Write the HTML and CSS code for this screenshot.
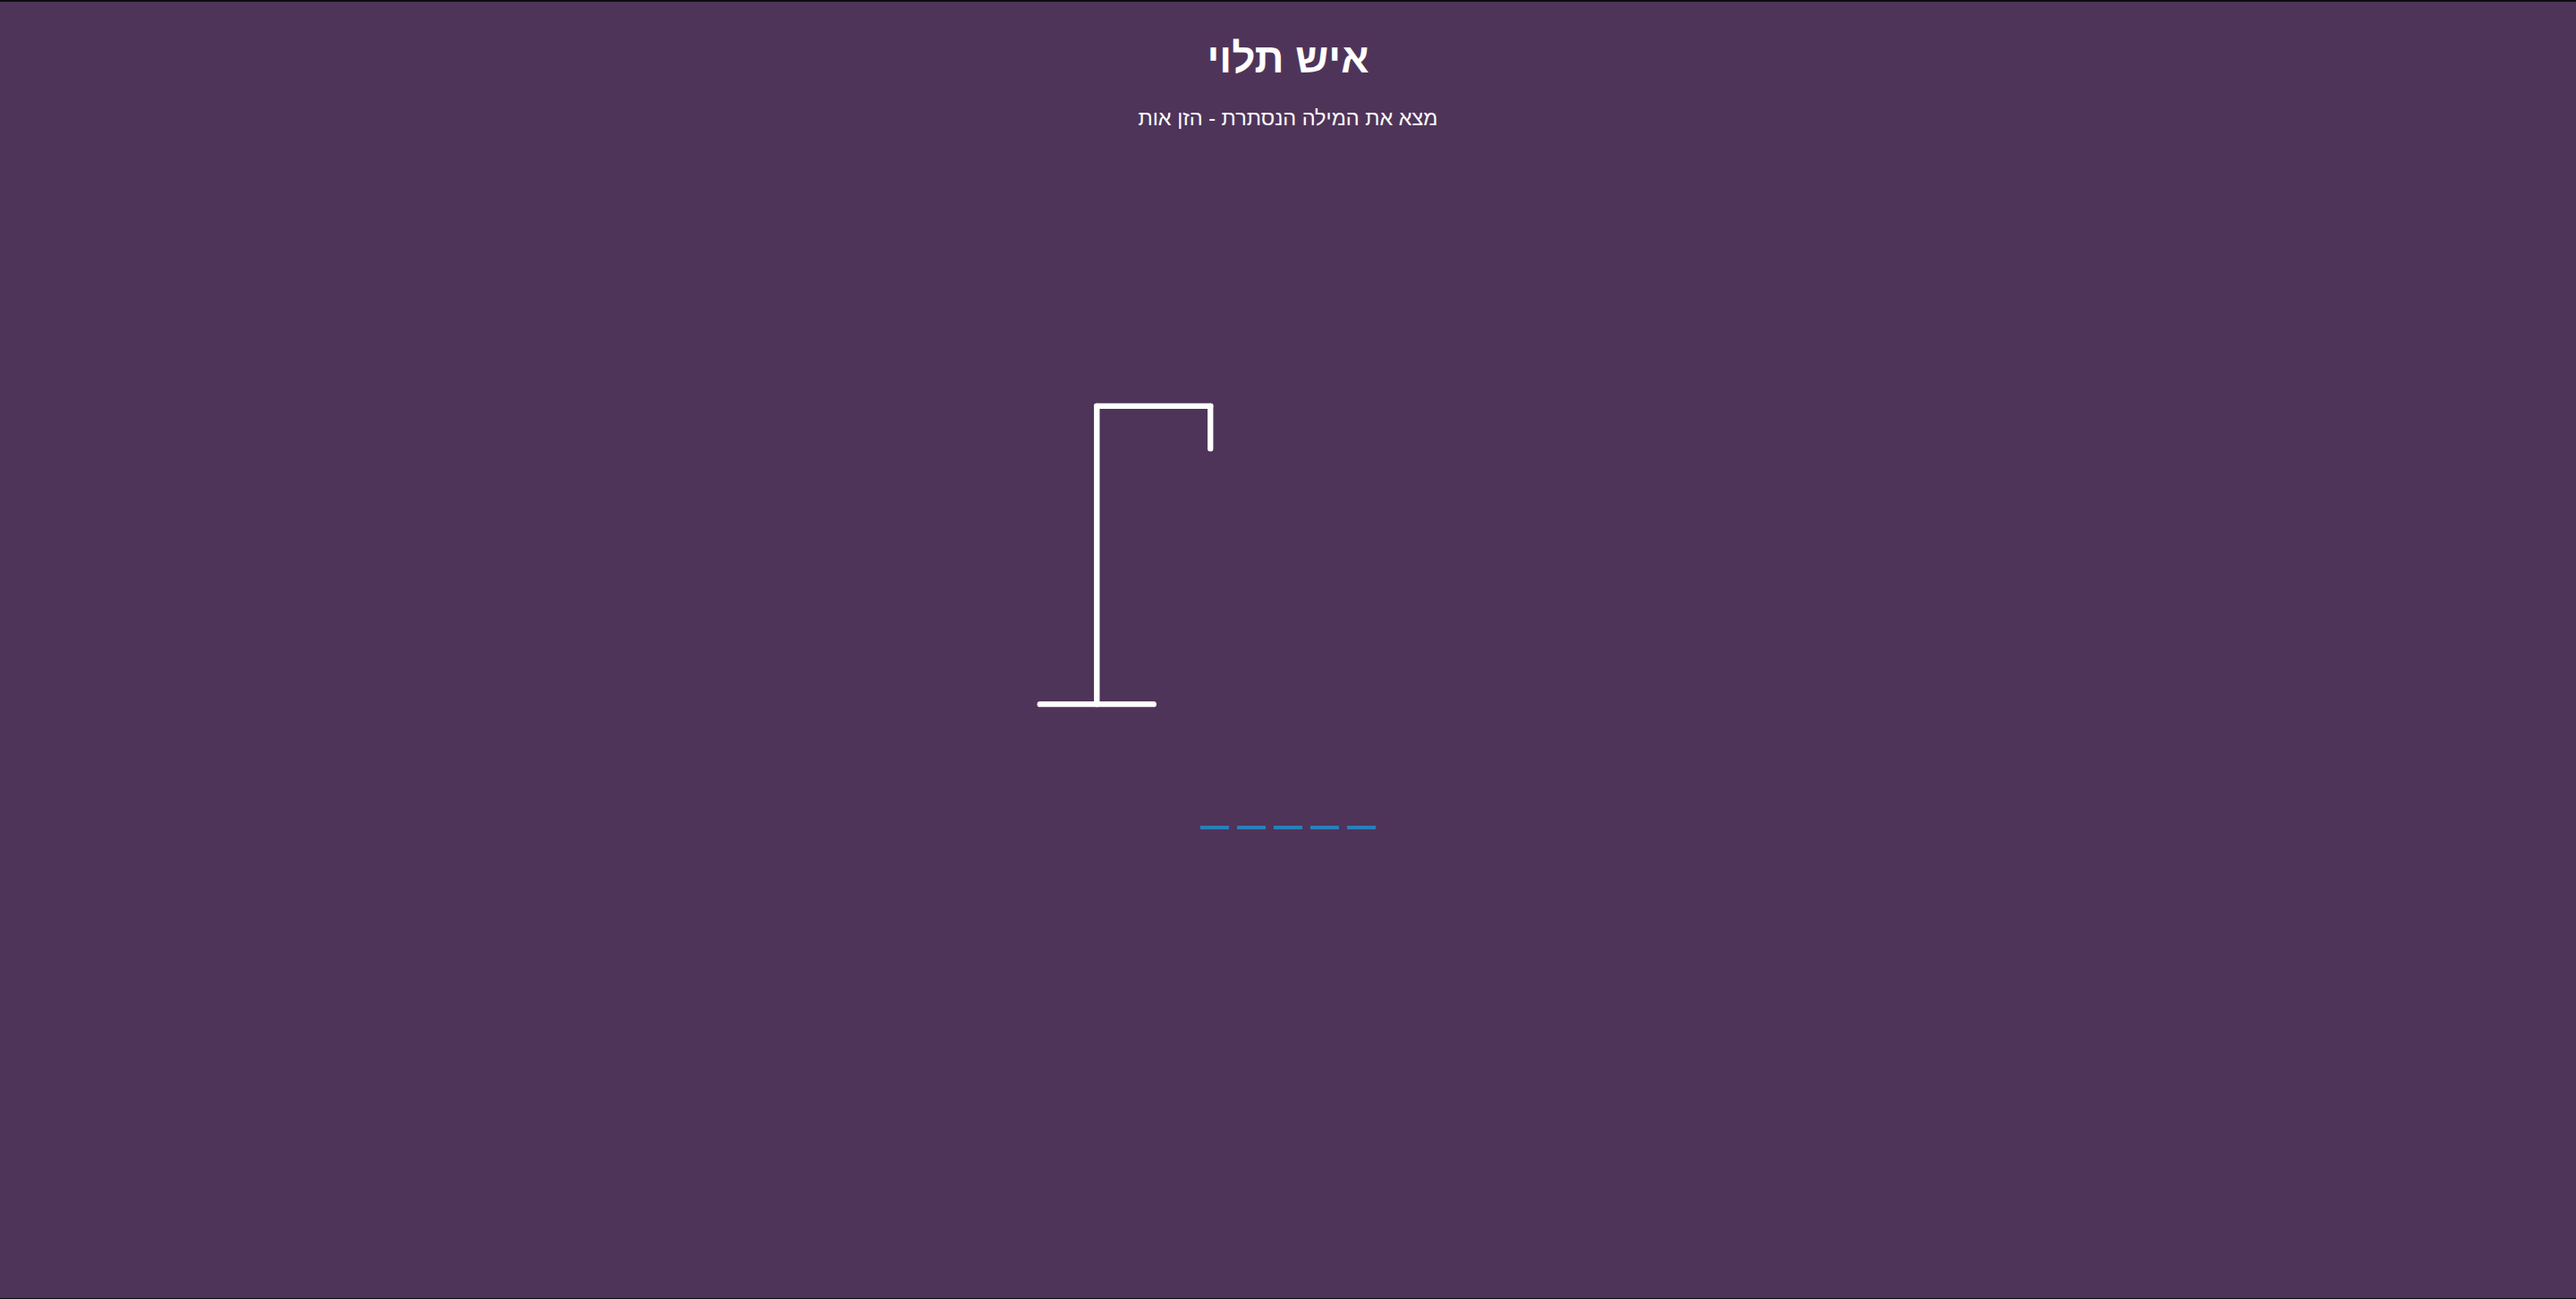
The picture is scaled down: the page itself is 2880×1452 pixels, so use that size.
FILE: index.html
```html
<!DOCTYPE html>
<html lang="he" dir="rtl">
<head>
<meta charset="utf-8">
<title>איש תלוי</title>
<link rel="stylesheet" href="styles.css">
</head>
<body>
  <h1 class="title">איש תלוי</h1>
  <p class="subtitle">מצא את המילה הנסתרת - הזן אות</p>
  <div class="game">
    <svg class="figure" width="317.5" height="397" viewBox="0 0 200 250">
      <line x1="60" y1="20" x2="140" y2="20"/>
      <line x1="140" y1="20" x2="140" y2="50"/>
      <line x1="60" y1="20" x2="60" y2="230"/>
      <line x1="20" y1="230" x2="100" y2="230"/>
    </svg>
    <div class="word">
      <span class="letter"></span>
      <span class="letter"></span>
      <span class="letter"></span>
      <span class="letter"></span>
      <span class="letter"></span>
    </div>
  </div>
</body>
</html>
```
FILE: styles.css
```css
* { box-sizing: border-box; }
html, body { margin: 0; padding: 0; }
body {
  height: 1452px;
  overflow: hidden;
  background: #4f345a;
  color: #fff;
  border-top: 2px solid #0d0d0d;
  border-bottom: 1px solid #0d0d0d;
  font-family: "Liberation Sans", "DejaVu Sans", sans-serif;
  display: flex;
  flex-direction: column;
  align-items: center;
}
.title {
  margin: 34px 0 0;
  font-size: 46px;
  font-weight: bold;
  line-height: 58px;
}
.subtitle {
  margin: 24px 0 0;
  font-size: 23.5px;
  line-height: 29px;
}
.game {
  margin-top: 275px;
  display: flex;
  flex-direction: column;
  align-items: center;
}
.figure {
  margin-right: 300px;
  fill: transparent;
  stroke: #fff;
  stroke-width: 4px;
  stroke-linecap: round;
}
.word {
  margin-top: 29px;
  display: flex;
  direction: ltr;
}
.letter {
  width: 32px;
  height: 79px;
  margin: 0 4.5px;
  border-bottom: 4px solid #2980b9;
}
```
